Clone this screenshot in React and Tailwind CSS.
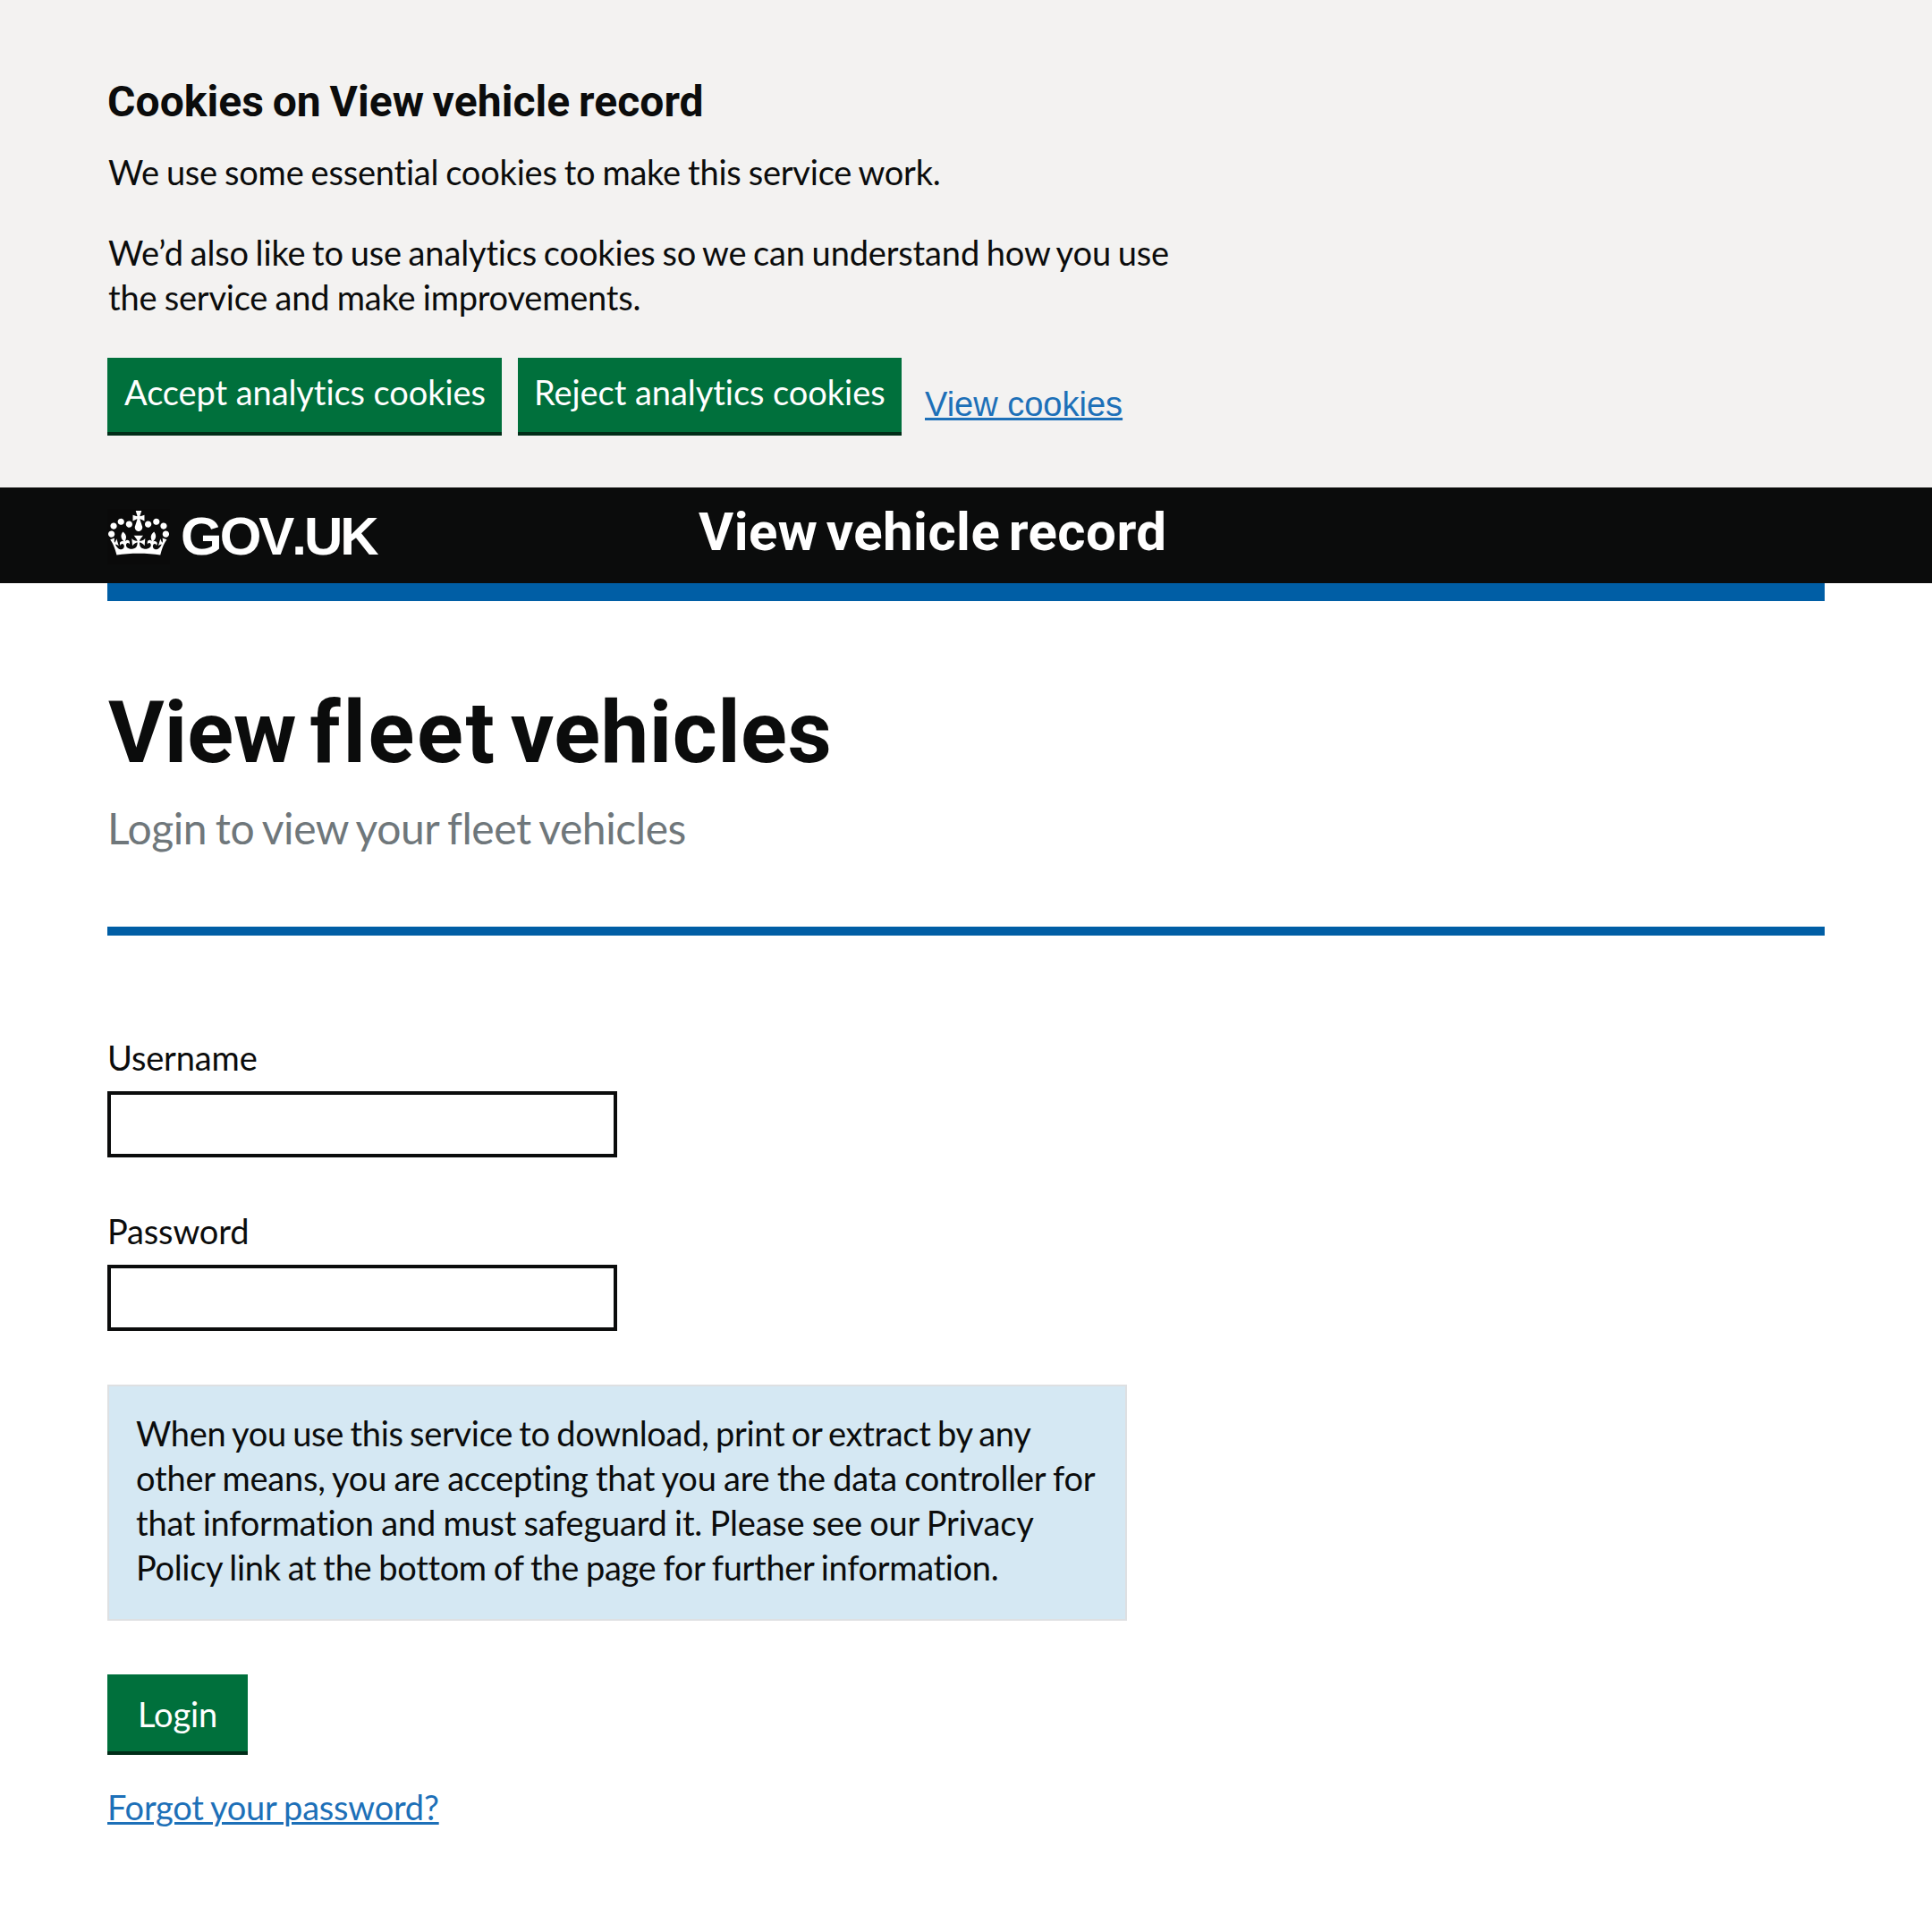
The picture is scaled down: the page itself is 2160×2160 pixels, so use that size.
const body = "font-[Lato,sans-serif] text-[38px] leading-[50px] whitespace-nowrap";

function Crown() {
  return (
    <svg viewBox="0 0 132 97" className="h-[50px] w-[68px]" fill="currentColor" aria-hidden="true">
      <path d="M25 30.2c3.5 1.5 7.7-.2 9.1-3.7 1.5-3.6-.2-7.8-3.9-9.2-3.6-1.4-7.6.3-9.1 3.9-1.4 3.5.3 7.5 3.9 9zM9 39.5c3.6 1.5 7.8-.2 9.2-3.7 1.5-3.6-.2-7.8-3.9-9.1-3.6-1.5-7.6.2-9.1 3.8-1.4 3.5.3 7.5 3.8 9zM4.4 57.2c3.5 1.5 7.7-.2 9.1-3.8 1.5-3.6-.2-7.7-3.9-9.1-3.5-1.5-7.6.3-9.1 3.8-1.4 3.5.3 7.6 3.9 9.1zm38.3-21.4c3.5 1.5 7.7-.2 9.1-3.8 1.5-3.6-.2-7.7-3.9-9.1-3.6-1.5-7.6.3-9.1 3.8-1.3 3.6.4 7.7 3.9 9.1zm64.4-5.6c-3.6 1.5-7.8-.2-9.1-3.7-1.5-3.6.2-7.8 3.8-9.2 3.6-1.4 7.7.3 9.2 3.9 1.3 3.5-.4 7.5-3.9 9zm15.9 9.3c-3.6 1.5-7.7-.2-9.1-3.7-1.5-3.6.2-7.8 3.7-9.1 3.6-1.5 7.7.2 9.2 3.8 1.5 3.5-.3 7.5-3.8 9zm4.7 17.7c-3.6 1.5-7.8-.2-9.2-3.8-1.5-3.6.2-7.7 3.9-9.1 3.6-1.5 7.7.3 9.2 3.8 1.3 3.5-.4 7.6-3.9 9.1zM89.3 35.8c-3.6 1.5-7.8-.2-9.2-3.8-1.4-3.6.2-7.7 3.9-9.1 3.6-1.5 7.7.3 9.2 3.8 1.4 3.6-.3 7.7-3.9 9.1zM69.7 17.7l8.9 4.7V9.3l-8.9 2.8c-.2-.3-.5-.6-.9-.9L72.4 0H59.6l3.5 11.2c-.3.3-.6.5-.9.9l-8.8-2.8v13.1l8.8-4.7c.3.3.6.7.9.9l-5 15.4v.1c-.2.8-.4 1.6-.4 2.4 0 4.1 3.1 7.5 7 8.1h.2c.3 0 .7.1 1 .1.4 0 .7 0 1-.1h.2c4-.6 7.1-4.1 7.1-8.1 0-.8-.1-1.7-.4-2.4V34l-5.1-15.4c.4-.2.7-.6 1-.9zM66 92.8c16.9 0 32.8 1.1 47.1 3.2 4-16.9 8.9-26.7 14-33.5l-9.6-3.4c1 4.9 1.1 7.2 0 10.2-1.5-1.4-3-4.3-4.2-8.7L108.6 76c2.8-2 5-3.2 7.5-3.3-4.4 9.4-10 11.9-13.6 11.2-4.3-.8-6.3-4.6-5.6-7.9 1-4.7 5.7-5.9 8-.5 4.3-8.7-3-11.4-7.6-8.8 7.1-7.2 7.9-13.5 2.1-21.1-8 6.1-8.1 12.3-4.5 20.8-4.7-5.4-12.1-2.5-9.5 6.2 3.4-5.2 7.9-2 7.2 3.1-.6 4.3-6.4 7.8-13.5 7.2-10.3-.9-10.9-8-11.2-13.8 2.5-.5 7.1 1.8 11 7.3L80.2 60c-4.1 4.4-8 5.3-12.3 5.4 1.4-4.4 8-11.6 8-11.6H55.5s6.4 7.2 7.9 11.6c-4.2-.1-8-1-12.3-5.4l1.4 16.4c3.9-5.5 8.5-7.7 10.9-7.3-.3 5.8-.9 12.8-11.1 13.8-7.2.6-12.9-2.9-13.5-7.2-.7-5 3.8-8.3 7.1-3.1 2.7-8.7-4.6-11.6-9.4-6.2 3.7-8.5 3.6-14.7-4.6-20.8-5.8 7.6-5 13.9 2.2 21.1-4.7-2.6-11.9.1-7.7 8.8 2.3-5.5 7.1-4.2 8.1.5.7 3.3-1.3 7.1-5.7 7.9-3.5.7-9-1.8-13.5-11.2 2.5.1 4.7 1.3 7.5 3.3l-4.7-15.4c-1.2 4.4-2.7 7.2-4.3 8.7-1.1-3-.9-5.3 0-10.2l-9.5 3.4c5 6.9 9.9 16.7 14 33.5 14.8-2.1 30.8-3.2 47.7-3.2z" />
    </svg>
  );
}

function CookieBanner() {
  return (
    <section className="h-[545px] bg-[#f3f2f1] px-[120px] pt-[84px]">
      <h2 className="whitespace-nowrap font-[Roboto,sans-serif] text-[48px] font-bold leading-[60px] tracking-[0.08px] [word-spacing:-2.4px]">
        Cookies on View vehicle record
      </h2>
      <div className={`${body} mt-[23px]`}>
        <p className="pl-px tracking-[-0.21px] [word-spacing:-1.47px]">
          We use some essential cookies to make this service work.
        </p>
        <p className="mt-10 pl-px">
          <span className="tracking-[-0.15px] [word-spacing:-1.85px]">
            We’d also like to use analytics cookies so we can understand how you use
          </span>
          <br />
          <span className="tracking-[-0.21px] [word-spacing:-1.1px]">the service and make improvements.</span>
        </p>
      </div>
      <div className={`${body} mt-[43px] flex`}>
        <button className="h-[87px] w-[441px] border-b-4 border-[#002d18] bg-[#00703c] pb-[20px] pl-[19px] pt-[13px] text-left tracking-[-0.08px] text-white">
          Accept analytics cookies
        </button>
        <button className="ml-[18px] h-[87px] w-[429px] border-b-4 border-[#002d18] bg-[#00703c] pb-[20px] pl-[18px] pt-[13px] text-left tracking-[-0.05px] text-white">
          Reject analytics cookies
        </button>
        <a
          href="#"
          className="ml-[26px] mt-[27px] h-[50px] font-['Liberation_Sans',sans-serif] text-[#1d70b8] underline decoration-[3px] underline-offset-[2px]"
        >
          View cookies
        </a>
      </div>
    </section>
  );
}

function Header() {
  return (
    <header>
      <div className="flex h-[107px] bg-[#0b0c0c] pl-[120px] text-white">
        <a href="#" className="flex w-[661px]">
          <span className="mt-[24px] flex h-[62px] w-[70px] justify-center bg-[#0a0a0a] pt-0.5">
            <Crown />
          </span>
          <span className="ml-3 mt-[20px] whitespace-nowrap font-['Liberation_Sans',sans-serif] text-[60px] font-bold leading-[70px] tracking-[-3px] [font-kerning:none]">
            GOV.UK
          </span>
        </a>
        <a
          href="#"
          className="mt-[15px] whitespace-nowrap font-[Roboto,sans-serif] text-[60px] font-bold leading-[70px] tracking-[0.45px] [word-spacing:-6px]"
        >
          View vehicle record
        </a>
      </div>
      <div className="mx-[120px] h-5 bg-[#005ea5]" />
    </header>
  );
}

function Field({ label, type }) {
  return (
    <label className={`${body} block`}>
      <span className="block h-[50px] tracking-[-0.15px]">{label}</span>
      <input type={type} className="mt-[13px] block h-[74px] w-[570px] border-4 border-[#0b0c0c] bg-white" />
    </label>
  );
}

export default function App() {
  return (
    <div className="h-[2160px] w-[2160px] overflow-hidden bg-white text-[#0b0c0c]">
      <CookieBanner />
      <Header />
      <main className="px-[120px] pt-[97px]">
        <h1 className="whitespace-nowrap pl-px font-[Roboto,sans-serif] text-[96px] font-bold leading-[100px] [word-spacing:-9px]">
          View <span className="tracking-[2.7px]">fleet</span> <span className="tracking-[0.5px]">vehicles</span>
        </h1>
        <p className="mt-[27px] whitespace-nowrap font-[Lato,sans-serif] text-[48px] leading-[60px] tracking-[-0.43px] text-[#6f777b] [word-spacing:-2.2px]">
          Login to view your fleet vehicles
        </p>
        <hr className="mt-20 h-2.5 border-0 bg-[#005ea5]" />
        <form className="mt-[111px]">
          <Field label="Username" type="text" />
          <div className="mt-[57px]">
            <Field label="Password" type="password" />
          </div>
          <div
            className={`${body} mt-[60px] h-[264px] w-[1140px] border-2 border-[#dee0e2] bg-[#d5e8f3] pl-[30px] pt-[27px]`}
          >
            <span className="tracking-[-0.3px] [word-spacing:-2px]">
              When you use this service to download, print or extract by any
            </span>
            <br />
            <span className="tracking-[-0.21px] [word-spacing:-1.2px]">
              other means, you are accepting that you are the data controller for
            </span>
            <br />
            <span className="tracking-[-0.21px] [word-spacing:-1.1px]">
              that information and must safeguard it. Please see our Privacy
            </span>
            <br />
            <span className="tracking-[-0.33px] [word-spacing:-1.33px]">
              Policy link at the bottom of the page for further information.
            </span>
          </div>
          <button
            type="button"
            className={`${body} mt-[60px] block h-[90px] w-[157px] border-b-4 border-[#002d18] bg-[#00703c] pb-[17px] pl-[34px] pt-[19px] text-left tracking-[-0.1px] text-white`}
          >
            Login
          </button>
          <a
            href="#"
            className={`${body} mt-[33px] inline-block text-[#1d70b8] underline decoration-[3px] underline-offset-[2px] tracking-[-0.22px] [word-spacing:-1.35px]`}
          >
            Forgot your password?
          </a>
        </form>
      </main>
    </div>
  );
}
